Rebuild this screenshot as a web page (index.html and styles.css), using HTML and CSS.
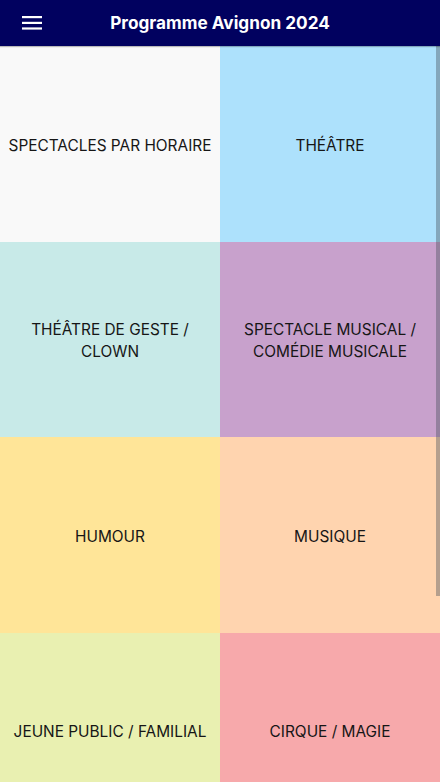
FILE: index.html
```html
<!DOCTYPE html>
<html lang="fr">
<head>
<meta charset="utf-8">
<title>Programme Avignon 2024</title>
<link rel="stylesheet" href="styles.css">
</head>
<body>
<div class="app">
  <header class="topbar">
    <button class="menu" aria-label="Menu">
      <svg width="20" height="14" viewBox="0 0 20 14"><rect x="0" y="0" width="20" height="2.2" fill="#fff"/><rect x="0" y="5.8" width="20" height="2.2" fill="#fff"/><rect x="0" y="11.4" width="20" height="2.2" fill="#fff"/></svg>
    </button>
    <h1 class="title">Programme Avignon 2024</h1>
  </header>
  <main class="grid">
    <a class="cell c1">SPECTACLES PAR HORAIRE</a>
    <a class="cell c2">THÉÂTRE</a>
    <a class="cell c3">THÉÂTRE DE GESTE /<br>CLOWN</a>
    <a class="cell c4">SPECTACLE MUSICAL /<br>COMÉDIE MUSICALE</a>
    <a class="cell c5">HUMOUR</a>
    <a class="cell c6">MUSIQUE</a>
    <a class="cell c7">JEUNE PUBLIC / FAMILIAL</a>
    <a class="cell c8">CIRQUE / MAGIE</a>
  </main>
  <div class="scrollbar"></div>
</div>
</body>
</html>
```

FILE: styles.css
```css
html, body {
  margin: 0;
  padding: 0;
  height: 100%;
  overflow: hidden;
}
body {
  font-family: Inter, "Noto Sans", sans-serif;
  background: #fff;
}
.app {
  position: relative;
  height: 782px;
  overflow: hidden;
}
.topbar {
  height: 46px;
  background: #01015f;
  display: flex;
  align-items: center;
  position: relative;
  box-shadow: 0 1px 1px rgba(0,0,0,0.25);
  z-index: 2;
}
.menu {
  background: none;
  border: 0;
  padding: 0;
  margin-left: 22px;
  width: 20px;
  height: 14px;
  display: flex;
}
.title {
  position: absolute;
  left: 0;
  right: 0;
  top: 0;
  margin: 0;
  line-height: 46px;
  text-align: center;
  color: #fff;
  font-size: 17.2px;
  font-weight: 700;
  pointer-events: none;
}
.grid {
  display: grid;
  grid-template-columns: 220px 220px;
  grid-auto-rows: 195.5px;
}
.cell {
  display: flex;
  align-items: center;
  justify-content: center;
  text-align: center;
  font-size: 15.4px;
  line-height: 22px;
  color: #161616;
  padding-top: 4px;
  box-sizing: border-box;
}
.c1 { background: #f9f9f9; }
.c2 { background: #ade1fc; }
.c3 { background: #c8eae8; }
.c4 { background: #c8a1cc; }
.c5 { background: #ffe598; }
.c6 { background: #ffd4af; }
.c7 { background: #e9f0b1; }
.c8 { background: #f7a9ab; }
.scrollbar {
  position: absolute;
  right: 0;
  top: 46px;
  width: 4px;
  height: 550px;
  background: rgba(70, 80, 90, 0.4);
}
```
